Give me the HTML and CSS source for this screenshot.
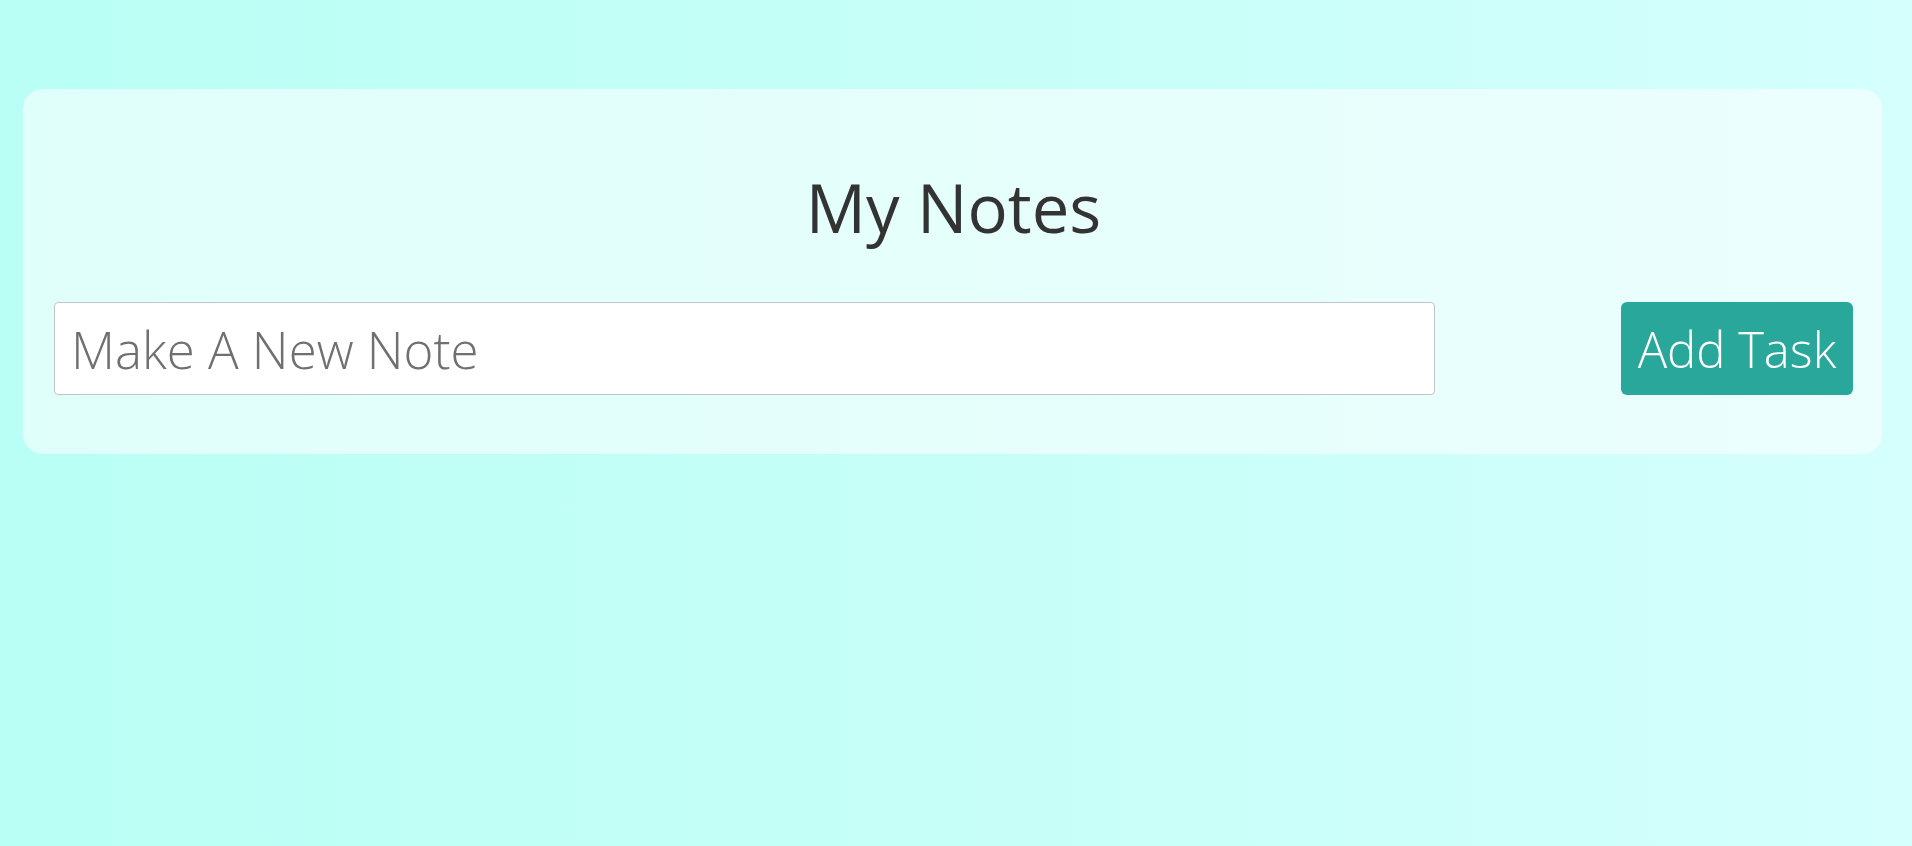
FILE: index.html
```html
<!DOCTYPE html>
<html lang="en">
<head>
<meta charset="utf-8">
<title>My Notes</title>
<link rel="stylesheet" href="styles.css">
</head>
<body>
<main class="app">
  <section class="card">
    <h1 class="title">My Notes</h1>
    <div class="row">
      <input class="note-input" type="text" placeholder="Make A New Note">
      <button class="add-btn" type="button">Add Task</button>
    </div>
  </section>
</main>
</body>
</html>
```
FILE: styles.css
```css
html, body {
  margin: 0;
  padding: 0;
  height: 100%;
}
body {
  background: linear-gradient(to right, #b9fff5 0%, #c6fff7 50%, #d4fffc 100%);
  font-family: "Open Sans", "Noto Sans", sans-serif;
  color: #333;
}
.app {
  padding: 89px 30px 0 23px;
}
.card {
  background: rgba(255, 255, 255, 0.55);
  border-radius: 20px;
  padding: 83px 29px 59px 31px;
}
.title {
  margin: 0 0 60px;
  text-align: center;
  font-weight: 400;
  font-size: 67px;
  line-height: 70px;
  color: #333;
}
.row {
  display: flex;
  justify-content: space-between;
  align-items: stretch;
}
.note-input {
  width: 1381px;
  height: 93px;
  box-sizing: border-box;
  border: 1px solid #c4c4c4;
  border-radius: 4px;
  background: #fff;
  padding: 0 16px;
  font-family: inherit;
  font-weight: 300;
  font-size: 51px;
  color: #333;
  outline: none;
}
.note-input::placeholder {
  color: #707070;
}
.add-btn {
  height: 93px;
  box-sizing: border-box;
  width: 232px;
  border: none;
  border-radius: 6px;
  background: #29a79a;
  color: #fff;
  font-family: inherit;
  font-weight: 300;
  font-size: 49px;
  padding: 0 8px;
  cursor: pointer;
}
```
